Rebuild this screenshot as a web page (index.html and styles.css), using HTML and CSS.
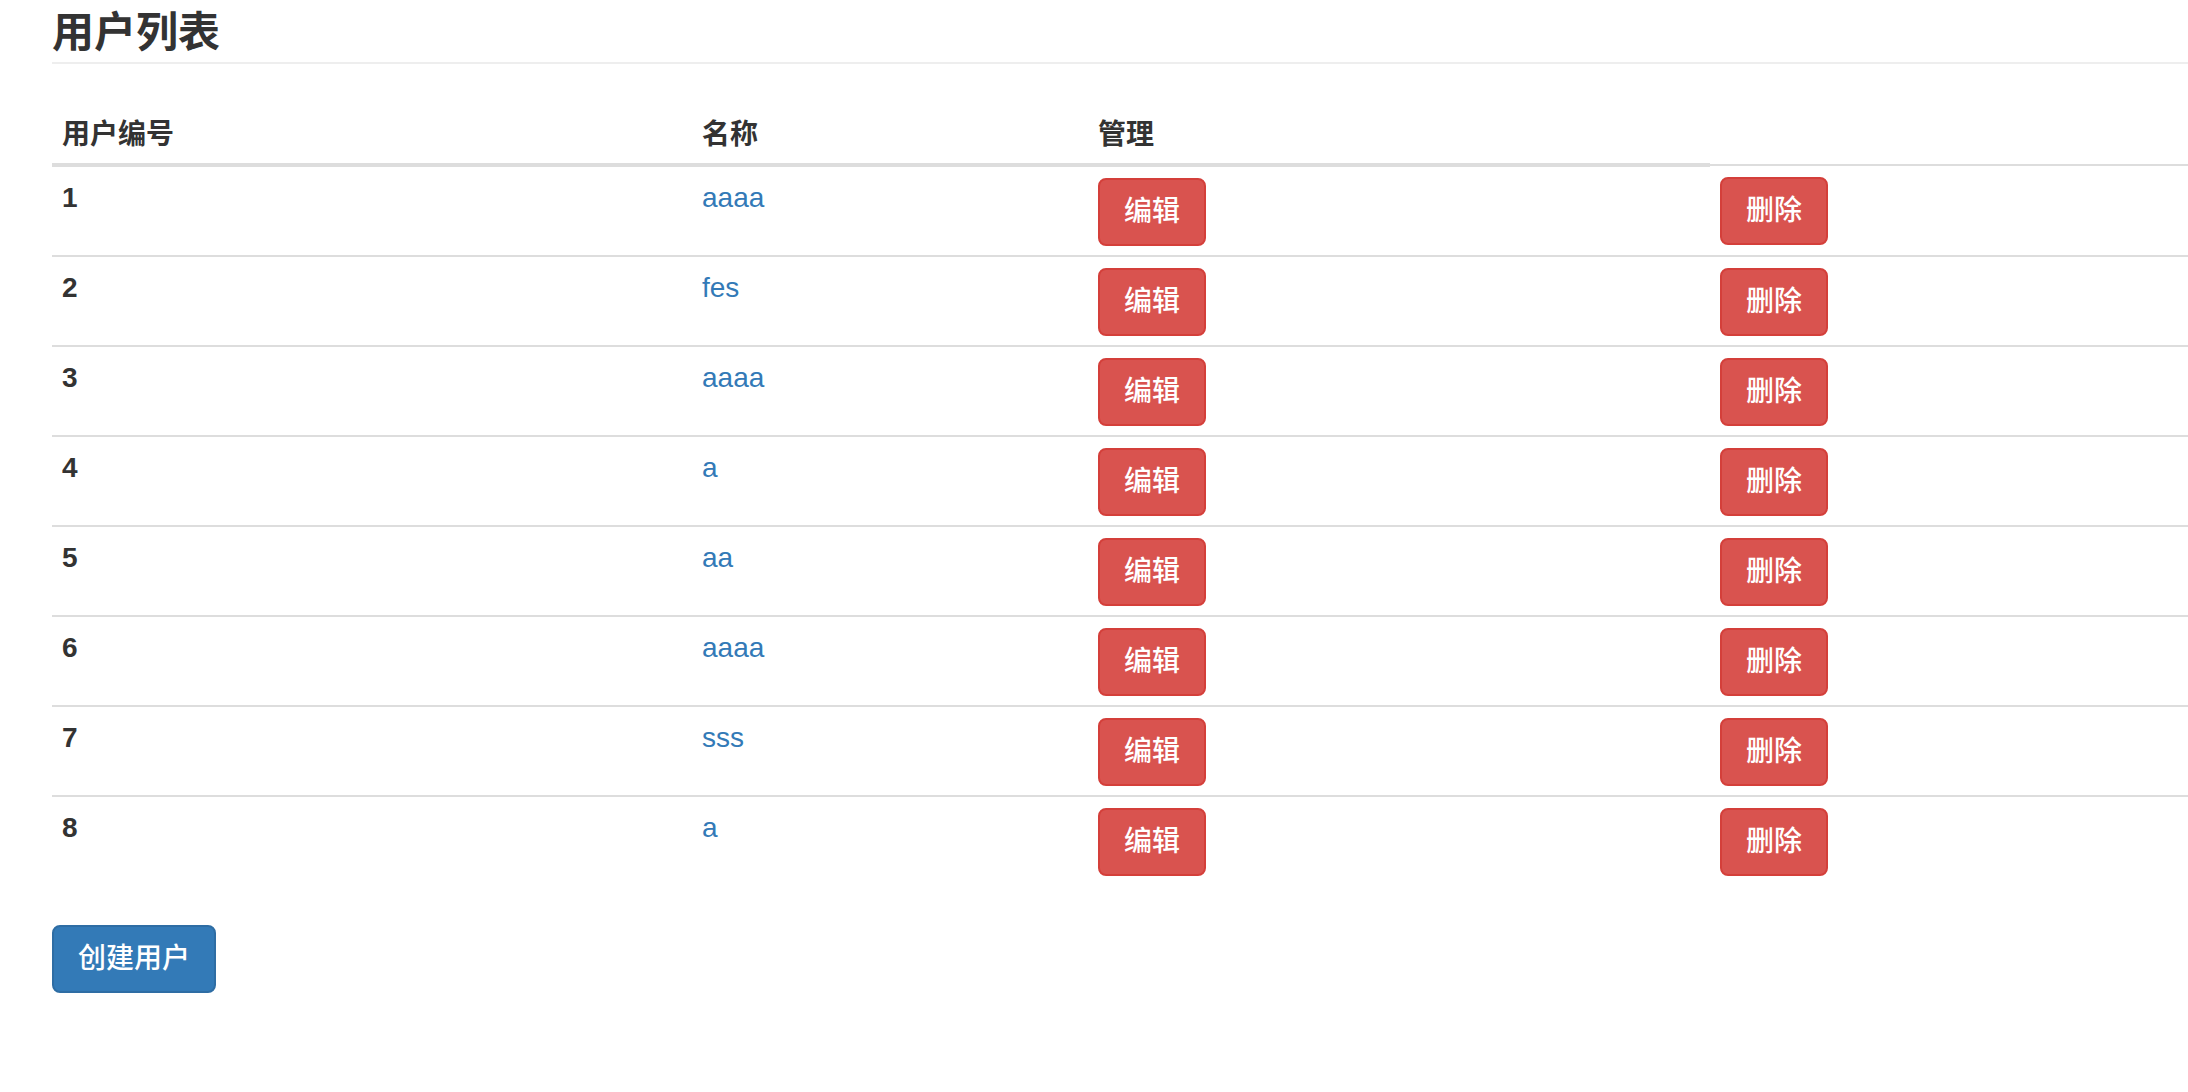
FILE: index.html
```html
<!DOCTYPE html>
<html lang="zh-CN">
<head>
<meta charset="utf-8">
<title>用户列表</title>
<link rel="stylesheet" href="styles.css">
</head>
<body>
<div class="container">
  <h1 class="page-header">用户列表</h1>
  <table class="table">
    <colgroup>
      <col class="col-id">
      <col class="col-name">
      <col class="col-edit">
      <col class="col-del">
    </colgroup>
    <thead>
      <tr><th>用户编号</th><th>名称</th><th>管理</th></tr>
    </thead>
    <tbody>
      <tr><th>1</th><td><a href="#">aaaa</a></td><td><a class="btn btn-danger" href="#">编辑</a></td><td><a class="btn btn-danger" href="#">删除</a></td></tr>
      <tr><th>2</th><td><a href="#">fes</a></td><td><a class="btn btn-danger" href="#">编辑</a></td><td><a class="btn btn-danger" href="#">删除</a></td></tr>
      <tr><th>3</th><td><a href="#">aaaa</a></td><td><a class="btn btn-danger" href="#">编辑</a></td><td><a class="btn btn-danger" href="#">删除</a></td></tr>
      <tr><th>4</th><td><a href="#">a</a></td><td><a class="btn btn-danger" href="#">编辑</a></td><td><a class="btn btn-danger" href="#">删除</a></td></tr>
      <tr><th>5</th><td><a href="#">aa</a></td><td><a class="btn btn-danger" href="#">编辑</a></td><td><a class="btn btn-danger" href="#">删除</a></td></tr>
      <tr><th>6</th><td><a href="#">aaaa</a></td><td><a class="btn btn-danger" href="#">编辑</a></td><td><a class="btn btn-danger" href="#">删除</a></td></tr>
      <tr><th>7</th><td><a href="#">sss</a></td><td><a class="btn btn-danger" href="#">编辑</a></td><td><a class="btn btn-danger" href="#">删除</a></td></tr>
      <tr><th>8</th><td><a href="#">a</a></td><td><a class="btn btn-danger" href="#">编辑</a></td><td><a class="btn btn-danger" href="#">删除</a></td></tr>
    </tbody>
  </table>
  <a class="btn btn-primary" href="#">创建用户</a>
</div>
</body>
</html>
```

FILE: styles.css
```css
html, body {
  margin: 0;
  padding: 0;
  background: #fff;
}
body {
  font-family: "Liberation Sans", "Noto Sans CJK SC", sans-serif;
  font-size: 28px;
  line-height: 40px;
  color: #333;
}
.container {
  padding: 0 0 0 52px;
}
.page-header {
  margin: 0;
  padding: 9px 0 5px 0;
  font-size: 42px;
  line-height: 48px;
  font-weight: 700;
  color: #333;
  border-bottom: 2px solid #eee;
}
.table {
  width: 100%;
  margin: 39px 0 40px 0;
  border-collapse: collapse;
  border-spacing: 0;
  table-layout: fixed;
}
.col-id { width: 640px; }
.col-name { width: 396px; }
.col-edit { width: 622px; }
.table th,
.table td {
  padding: 11px 10px 9px 10px;
  text-align: left;
  vertical-align: top;
  line-height: 40px;
}
.table thead th {
  padding: 12px 10px 8px 10px;
  font-weight: 700;
  vertical-align: bottom;
  border-bottom: 4px solid #ddd;
}
.table tbody th,
.table tbody td {
  border-top: 2px solid #ddd;
}
.table tbody th {
  font-weight: 700;
}
a {
  color: #337ab7;
  text-decoration: none;
}
.btn {
  display: inline-block;
  vertical-align: top;
  padding: 12px 24px;
  font-size: 28px;
  font-weight: 500;
  line-height: 40px;
  border: 2px solid transparent;
  border-radius: 8px;
  color: #fff;
  white-space: nowrap;
}
.btn-danger {
  background: #d9534f;
  border-color: #d43f3a;
}
.btn-primary {
  background: #337ab7;
  border-color: #2e6da4;
}
```
